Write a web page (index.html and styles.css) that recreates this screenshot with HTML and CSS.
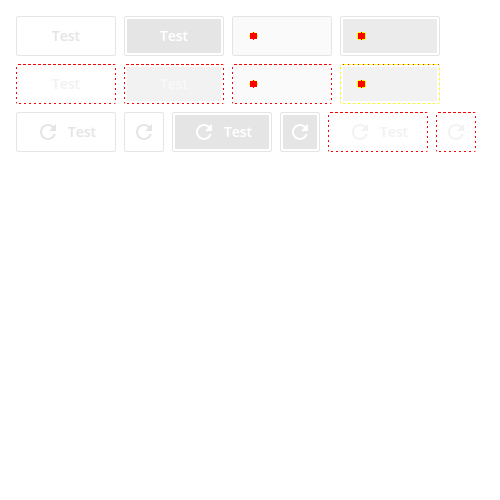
FILE: index.html
```
<!DOCTYPE html>
<html lang="en">
<head>
<meta charset="utf-8">
<title>Buttons</title>
<link rel="stylesheet" href="styles.css">
</head>
<body>
<svg class="defs" aria-hidden="true">
<symbol id="refresh" viewBox="0 0 24 24"><path d="M17.65 6.35C16.2 4.9 14.21 4 12 4c-4.42 0-7.99 3.58-7.99 8s3.57 8 7.99 8c3.73 0 6.84-2.55 7.73-6h-2.08c-.82 2.33-3.04 4-5.65 4-3.31 0-6-2.69-6-6s2.69-6 6-6c1.66 0 3.14.69 4.22 1.78L13 11h7V4l-2.35 2.35z"/></symbol>
<symbol id="dot" viewBox="0 0 9 8"><path fill="#ff0" d="M3 0h3v1H3zM0 3h9v2H0z"/><path fill="red" d="M1 1h7v6H1zM4 0h1v8H4z"/></symbol>
<symbol id="dot-framed" viewBox="0 0 9 8"><path fill="#ff0" d="M1 0h7v1h1v6H8v1H1V7H0V1h1z"/><path fill="red" d="M1 1h7v6H1z"/><path fill="#a00" d="M4 0h1v1H4zM4 7h1v1H4z"/></symbol>
</svg>
<main class="page">
<div class="row">
<button class="button">Test</button>
<button class="button filled">Test</button>
<button class="button loading" aria-label="Loading"><svg class="dot"><use href="#dot"/></svg></button>
<button class="button filled loading" aria-label="Loading"><svg class="dot"><use href="#dot-framed"/></svg></button>
</div>
<div class="row">
<button class="button dashed">Test</button>
<button class="button filled dashed">Test</button>
<button class="button loading dashed" aria-label="Loading"><svg class="dot"><use href="#dot"/></svg></button>
<button class="button filled loading dashed mixed" aria-label="Loading"><svg class="dot"><use href="#dot-framed"/></svg></button>
</div>
<div class="row">
<button class="button"><svg class="icon"><use href="#refresh"/></svg>Test</button>
<button class="button square" aria-label="Refresh"><svg class="icon"><use href="#refresh"/></svg></button>
<button class="button filled"><svg class="icon"><use href="#refresh"/></svg>Test</button>
<button class="button filled square" aria-label="Refresh"><svg class="icon"><use href="#refresh"/></svg></button>
<button class="button dashed"><svg class="icon"><use href="#refresh"/></svg>Test</button>
<button class="button square dashed" aria-label="Refresh"><svg class="icon"><use href="#refresh"/></svg></button>
</div>
</main>
</body>
</html>
```
FILE: styles.css
```
body {
  margin: 0;
  background: #fff;
}

.defs {
  position: absolute;
  width: 0;
  height: 0;
}

.page {
  display: grid;
  gap: 8px;
  padding: 16px;
}

.row {
  display: flex;
  gap: 8px;
}

.button {
  --fill: #fff;
  display: flex;
  flex: none;
  align-items: center;
  justify-content: center;
  gap: 8px;
  box-sizing: border-box;
  width: 100px;
  height: 40px;
  padding: 0;
  border: 1px solid #e5e5e5;
  border-radius: 2px;
  background: var(--fill) content-box;
  color: #e5e5e5;
  font: 600 14px/20px "Open Sans", sans-serif;
}

.square {
  width: 40px;
}

.filled {
  --fill: #e5e5e5;
  padding: 2px;
  color: #fff;
}

.loading {
  --fill: #fafafa;
  justify-content: flex-start;
}

.filled.loading {
  --fill: #ebebeb;
}

/* Dashed edges: 3px dashes along the top, 2px dashes on the other sides. */
.dashed {
  --dash: red;
  --gap: transparent;
  --top: repeating-linear-gradient(90deg, red 0 3px, transparent 3px 5px);
  --across: repeating-linear-gradient(90deg, var(--dash) 0 2px, var(--gap) 2px 5px);
  --down: repeating-linear-gradient(var(--gap) 0 3px, var(--dash) 3px 5px);
  border-color: transparent;
  background:
    var(--top) 2px 0 / 100% 1px no-repeat border-box,
    var(--across) 3px 100% / 100% 1px no-repeat border-box,
    var(--down) 0 0 / 1px 100% no-repeat border-box,
    var(--down) 100% 1px / 1px 100% no-repeat border-box,
    var(--fill) content-box;
  color: #f2f2f2;
}

.filled.dashed {
  --fill: #f2f2f2;
  color: #f9f9f9;
}

.loading.dashed {
  --fill: #fafafa;
}

.loading.mixed {
  --fill: #f2f2f2;
  --dash: #ff0;
  --gap: #f2f2f2;
  --top: repeating-linear-gradient(90deg, #ff0 0 1px, red 1px 2px, #ff0 2px 4px, #f2f2f2 4px 5px);
}

.icon {
  width: 24px;
  height: 24px;
  fill: currentColor;
}

.dot {
  width: 9px;
  height: 8px;
  margin-left: 16px;
}

.filled .dot {
  margin-left: 14px;
}
```
